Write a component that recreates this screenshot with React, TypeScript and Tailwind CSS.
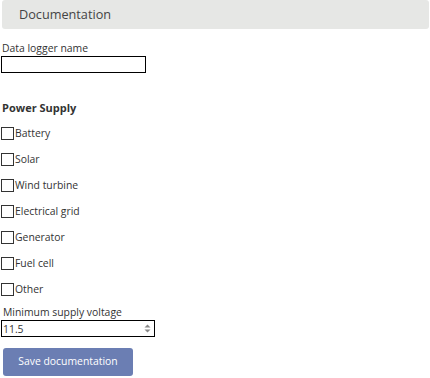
import React from "react";

const items = ["Battery", "Solar", "Wind turbine", "Electrical grid", "Generator", "Fuel cell", "Other"];

export default function App() {
  return (
    <div className="w-[430px] h-[378px] overflow-hidden bg-white font-['Open_Sans',sans-serif] text-[#333]">
      <div className="ml-[2px] mr-[1px] h-[29px] rounded-[3px] bg-[#e6e7e5] flex items-center pl-[17px] text-[12.7px] text-[#444]">
        Documentation
      </div>
      <div className="pt-[12px] pl-[1px]">
        <label className="block text-[10.4px] leading-[15px] pl-[1px]">Data logger name</label>
        <input type="text" className="block w-[145px] h-[17px] border border-black bg-white outline-none" />
        <div className="mt-[27px] text-[11px] font-bold leading-[16px] pl-[1px]">Power Supply</div>
        <div className="mt-[11px] flex flex-col gap-[13px]">
          {items.map((it) => (
            <label key={it} className="flex items-center h-[13px] text-[10.4px]">
              <input type="checkbox" className="appearance-none w-[13px] h-[13px] border border-[#333] bg-white m-0" />
              <span className="ml-[1px] leading-[13px]">{it}</span>
            </label>
          ))}
        </div>
        <label className="mt-[9px] block text-[10.4px] leading-[15px] pl-[2px]">Minimum supply voltage</label>
        <div className="relative w-[154px]">
          <input
            type="number"
            defaultValue={11.5}
            step={0.1}
            className="block w-[154px] h-[17px] border border-black bg-white text-[10.4px] px-[1px] outline-none [appearance:textfield] [&::-webkit-inner-spin-button]:appearance-none [&::-webkit-outer-spin-button]:appearance-none"
          />
          <svg className="absolute right-[4px] top-[4px]" width="7" height="9" viewBox="0 0 7 9">
            <path d="M3.5 0.5 L6.5 3.5 L0.5 3.5 Z" fill="#888" />
            <path d="M3.5 8.5 L6.5 5.5 L0.5 5.5 Z" fill="#888" />
          </svg>
        </div>
        <button className="mt-[11px] ml-[2px] w-[130px] h-[28px] rounded-[3px] bg-[#6b7eb3] text-white text-[10.4px]">
          Save documentation
        </button>
      </div>
    </div>
  );
}
